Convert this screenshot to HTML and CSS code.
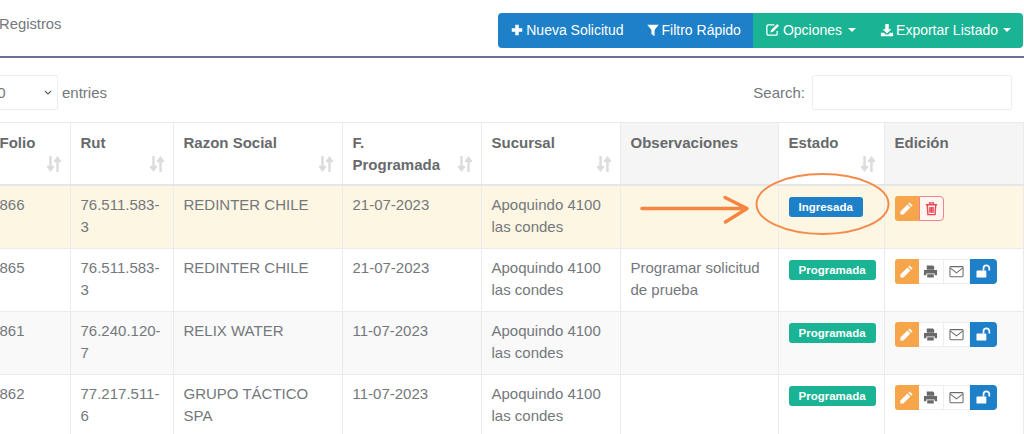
FILE: index.html
```html
<!DOCTYPE html>
<html lang="es">
<head>
<meta charset="utf-8">
<title>Registros</title>
<link rel="stylesheet" href="styles.css">
</head>
<body>
<svg class="defs" width="0" height="0" aria-hidden="true">
  <symbol id="i-plus" viewBox="0 0 16 16"><path d="M6 2h4v4h4v4h-4v4H6v-4H2V6h4z" fill="currentColor"/></symbol>
  <symbol id="i-filter" viewBox="0 0 16 16"><path d="M1.500 2h13L9.800 8v7L6.200 12.500V8z" fill="currentColor"/></symbol>
  <symbol id="i-edit" viewBox="0 0 16 16"><path d="M13 9.500V12.500A1.500 1.500 0 0 1 11.500 14h-8A1.500 1.500 0 0 1 2 12.500v-8A1.500 1.500 0 0 1 3.500 3H10" fill="none" stroke="currentColor" stroke-width="1.400"/><path d="M13 2l2 2-6.500 6.500-2.700.7.700-2.700z" fill="currentColor"/></symbol>
  <symbol id="i-down" viewBox="0 0 16 16"><path d="M6 1h4v6h3l-5 5-5-5h3z" fill="currentColor"/><path d="M1 11h3.500l2 2h3l2-2H15v4H1z" fill="currentColor"/></symbol>
  <symbol id="i-pencil" viewBox="0 0 16 16"><path d="M11.300 1.500l3.200 3.200-1.400 1.400-3.200-3.200zM9 3.800L12.200 7l-7.500 7.500H1.500v-3.200z" fill="currentColor"/></symbol>
  <symbol id="i-trash" viewBox="0 0 16 16"><path d="M2 4h12M6 4V2h4v2M3.500 4l.7 10.500h7.600L12.500 4M6.300 6.500v6M8 6.500v6M9.700 6.500v6" fill="none" stroke="currentColor" stroke-width="1.500"/></symbol>
  <symbol id="i-print" viewBox="0 0 16 16"><path d="M4 1.500h6.500L12 3v3H4zM1 6.500h14V12h-2.500v-2h-9v2H1zM4.500 11h7v3.500h-7z" fill="currentColor"/></symbol>
  <symbol id="i-mail" viewBox="0 0 16 16"><rect x="1" y="2.800" width="14" height="10.700" rx="1" fill="none" stroke="currentColor" stroke-width="1.100"/><path d="M1.500 4.300L8 9.500l6.500-5.200" fill="none" stroke="currentColor" stroke-width="1.100"/></symbol>
  <symbol id="i-unlock" viewBox="0 0 16 16"><rect x="0.500" y="7" width="10.500" height="7.500" rx="1" fill="currentColor"/><path d="M8 7V4.500a3 3 0 0 1 6.200 0V7" fill="none" stroke="currentColor" stroke-width="1.800"/></symbol>
  <symbol id="i-sort" viewBox="0 0 16 18"><path d="M4.500 1v13M1.500 11l3 4 3-4" fill="none" stroke="currentColor" stroke-width="2.400"/><path d="M11.500 17V4M8.500 7l3-4 3 4" fill="none" stroke="currentColor" stroke-width="2.400"/></symbol>
</svg>

<header class="top">
  <h1 class="title">Registros</h1>
  <div class="toolbar">
    <a class="tbtn blue first"><svg class="ic"><use href="#i-plus"/></svg>Nueva Solicitud</a>
    <a class="tbtn blue"><svg class="ic"><use href="#i-filter"/></svg>Filtro Rápido</a>
    <a class="tbtn green"><svg class="ic ic-lg"><use href="#i-edit"/></svg>Opciones<span class="caret wide"></span></a>
    <a class="tbtn green"><svg class="ic"><use href="#i-down"/></svg>Exportar Listado<span class="caret"></span></a>
  </div>
</header>

<div class="controls">
  <label class="length">
    <span class="selwrap">
      <select class="sel"><option>10</option></select>
      <svg class="chev" viewBox="0 0 8 5"><path d="M1 1l3 3 3-3" fill="none" stroke="currentColor" stroke-width="1.100"/></svg>
    </span>
    entries
  </label>
  <label class="search">Search: <input class="inp" type="search"></label>
</div>

<table class="grid">
  <colgroup>
    <col class="c1"><col class="c2"><col class="c3"><col class="c4"><col class="c5"><col class="c6"><col class="c7"><col class="c8">
  </colgroup>
  <thead>
    <tr>
      <th>Folio<svg class="sort"><use href="#i-sort"/></svg></th>
      <th>Rut<svg class="sort"><use href="#i-sort"/></svg></th>
      <th>Razon Social<svg class="sort"><use href="#i-sort"/></svg></th>
      <th>F.<br>Programada<svg class="sort"><use href="#i-sort"/></svg></th>
      <th>Sucursal<svg class="sort"><use href="#i-sort"/></svg></th>
      <th class="plain">Observaciones</th>
      <th>Estado<svg class="sort"><use href="#i-sort"/></svg></th>
      <th class="plain">Edición</th>
    </tr>
  </thead>
  <tbody>
    <tr class="hl">
      <td>866</td><td>76.511.583-3</td><td>REDINTER CHILE</td><td>21-07-2023</td><td>Apoquindo 4100 las condes</td><td></td>
      <td><span class="badge b-blue">Ingresada</span></td>
      <td><div class="acts"><span class="act a-orange"><svg class="ai"><use href="#i-pencil"/></svg></span><span class="act a-red"><svg class="ai"><use href="#i-trash"/></svg></span></div></td>
    </tr>
    <tr>
      <td>865</td><td>76.511.583-3</td><td>REDINTER CHILE</td><td>21-07-2023</td><td>Apoquindo 4100 las condes</td><td>Programar solicitud de prueba</td>
      <td><span class="badge b-green">Programada</span></td>
      <td><div class="acts"><span class="act a-orange"><svg class="ai"><use href="#i-pencil"/></svg></span><span class="act a-white"><svg class="ai"><use href="#i-print"/></svg></span><span class="act a-white"><svg class="ai"><use href="#i-mail"/></svg></span><span class="act a-blue"><svg class="ai"><use href="#i-unlock"/></svg></span></div></td>
    </tr>
    <tr class="alt">
      <td>861</td><td>76.240.120-7</td><td>RELIX WATER</td><td>11-07-2023</td><td>Apoquindo 4100 las condes</td><td></td>
      <td><span class="badge b-green">Programada</span></td>
      <td><div class="acts"><span class="act a-orange"><svg class="ai"><use href="#i-pencil"/></svg></span><span class="act a-white"><svg class="ai"><use href="#i-print"/></svg></span><span class="act a-white"><svg class="ai"><use href="#i-mail"/></svg></span><span class="act a-blue"><svg class="ai"><use href="#i-unlock"/></svg></span></div></td>
    </tr>
    <tr>
      <td>862</td><td>77.217.511-6</td><td>GRUPO TÁCTICO SPA</td><td>11-07-2023</td><td>Apoquindo 4100 las condes</td><td></td>
      <td><span class="badge b-green">Programada</span></td>
      <td><div class="acts"><span class="act a-orange"><svg class="ai"><use href="#i-pencil"/></svg></span><span class="act a-white"><svg class="ai"><use href="#i-print"/></svg></span><span class="act a-white"><svg class="ai"><use href="#i-mail"/></svg></span><span class="act a-blue"><svg class="ai"><use href="#i-unlock"/></svg></span></div></td>
    </tr>
  </tbody>
</table>

<svg class="note" viewBox="0 0 1024 434" aria-hidden="true">
  <ellipse cx="822.500" cy="204" rx="66" ry="30" fill="none" stroke="#f58a4b" stroke-width="2"/>
  <path d="M642 208.500H746M725 197.500l22 11-21.500 13.500" fill="none" stroke="#f5853f" stroke-width="3.500" stroke-linecap="round" stroke-linejoin="round"/>
</svg>
</body>
</html>
```
FILE: styles.css
```css
html, body {
  margin: 0;
  padding: 0;
  height: 434px;
  overflow: hidden;
  background: #fff;
}
body {
  position: relative;
  width: 1024px;
  font-family: "Liberation Sans", Arial, sans-serif;
  font-size: 15px;
  line-height: 22px;
  color: #73787c;
}
.defs { display: block; height: 0; }

.top {
  display: flex;
  justify-content: space-between;
  align-items: flex-start;
  height: 43px;
  padding: 13px 1px 0 0;
  border-bottom: 2px solid #6b7095;
}
.title {
  margin: 0 0 0 -1px;
  font-size: 14.800px;
  font-weight: 400;
  line-height: 22px;
  color: #73787c;
}
.toolbar {
  display: flex;
  height: 35px;
  border-radius: 4px;
  overflow: hidden;
}
.tbtn {
  display: flex;
  align-items: center;
  box-sizing: border-box;
  padding: 0 12px 2px;
  font-size: 14px;
  color: #fff;
  white-space: nowrap;
}
.tbtn.blue { background: #1d80c8; }
.tbtn.first { padding-right: 13px; }
.tbtn.blue + .tbtn.blue { padding-left: 9px; }
.tbtn.green { background: #1ab393; }
.ic { width: 14px; height: 14px; margin-right: 2px; flex: none; }
.ic-lg { width: 15px; height: 15px; margin-right: 3px; }
.caret {
  width: 0;
  height: 0;
  margin-left: 5px;
  border-left: 4.500px solid transparent;
  border-right: 4.500px solid transparent;
  border-top: 4.500px solid #fff;
}
.caret.wide { margin-left: 6px; }

.controls {
  display: flex;
  justify-content: space-between;
  align-items: center;
  height: 35px;
  margin-top: 17px;
  padding-right: 12px;
}
.length { display: flex; align-items: center; gap: 4px; font-size: 15px; }
.selwrap { position: relative; display: block; height: 35px; margin-left: -22px; }
.sel {
  display: block;
  width: 80px;
  height: 35px;
  padding: 0 6px 0 10px;
  border: 1px solid #eceef0;
  border-radius: 2px;
  appearance: none;
  background: #fff;
  color: #73787c;
  font: 15px "Liberation Sans", Arial, sans-serif;
}
.chev {
  position: absolute;
  right: 6px;
  top: 15px;
  width: 8px;
  height: 5px;
  color: #5c6063;
}
.search { display: flex; align-items: center; gap: 7px; font-size: 15px; }
.inp {
  width: 200px;
  height: 35px;
  box-sizing: border-box;
  border: 1px solid #eceef0;
  border-radius: 2px;
  background: #fff;
}

.grid {
  width: 1034px;
  margin: 12px 0 0 -11px;
  table-layout: fixed;
  border-collapse: collapse;
}
.c1 { width: 81px; }
.c2 { width: 103px; }
.c3 { width: 169px; }
.c4 { width: 139px; }
.c5 { width: 139px; }
.c6 { width: 158px; }
.c7 { width: 106px; }
.c8 { width: 139px; }

.grid th, .grid td {
  border: 1px solid #e9ebec;
  padding: 8px 9px 10px 9.500px;
  vertical-align: top;
  text-align: left;
}
.grid th {
  position: relative;
  height: 44px;
  padding: 9px 9px 8px 9.500px;
  font-weight: 700;
  color: #676a6c;
  background: #fff;
  border-bottom: 2px solid #e4e6e8;
}
.grid th.plain { background: #f5f5f5; }
.grid td { height: 44px; }
.sort {
  position: absolute;
  right: 8px;
  bottom: 11px;
  width: 16px;
  height: 18px;
  color: #dcdcdc;
}
.hl td { background: #fdf6e3; }
.alt td { background: #f9f9f9; }

.badge {
  display: inline-block;
  height: 20px;
  margin-top: 3px;
  padding: 0 10px;
  border-radius: 3px;
  font-size: 11.500px;
  line-height: 20px;
  font-weight: 700;
  color: #fff;
}
.b-blue { background: #1d80c8; }
.b-green { background: #1ab393; }

.acts { display: flex; margin: 2px 0 0 0; }
.act {
  display: flex;
  align-items: center;
  justify-content: center;
  box-sizing: border-box;
  width: 25px;
  height: 25px;
}
.act:first-child { border-radius: 3px 0 0 3px; }
.act:last-child { border-radius: 0 4px 4px 0; }
.ai { width: 15px; height: 15px; }
.a-orange { width: 24px; background: #f7a54a; color: #fff; }
.a-red { background: #fff6ef; border: 1px solid #f0828f; color: #ec4758; }
.a-white { width: 25.500px; background: #fff; border: 1px solid #eeeeee; border-left: 0; color: #676a6c; }
.a-blue { width: 27px; background: #1d80c8; color: #fff; }

.note {
  position: absolute;
  left: 0;
  top: 0;
  width: 1024px;
  height: 434px;
  pointer-events: none;
}
```
